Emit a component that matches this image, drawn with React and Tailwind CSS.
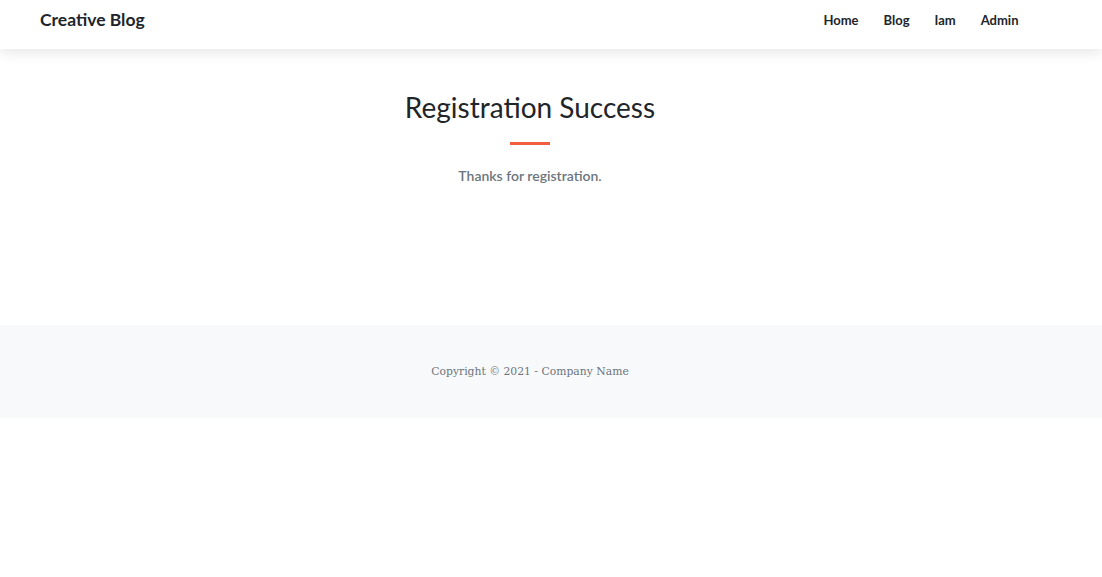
export default function App() {
  return (
    <div className="min-h-[577px] bg-white">
      <nav className="relative z-10 h-[49px] bg-white shadow-[0_2px_14px_rgba(0,0,0,0.12)] flex items-start justify-between pt-[9px] pl-[40px] pr-[71px] font-['Lato',sans-serif]">
        <span className="text-[17.5px] leading-[22px] font-bold text-[#212529]">Creative Blog</span>
        <div className="flex items-center pt-[1px] text-[13px] leading-[20px] font-bold text-[#212529]">
          <a className="px-[12.5px]">Home</a>
          <a className="px-[12.5px]">Blog</a>
          <a className="px-[12.5px]">Iam</a>
          <a className="px-[12.5px]">Admin</a>
        </div>
      </nav>
      <section className="h-[276px] pr-[42px] flex flex-col items-center font-['Lato',sans-serif]">
        <h2 className="mt-[40px] text-[28px] leading-[36px] text-[#212529]">Registration Success</h2>
        <hr className="mt-[17px] w-[40px] border-0 h-[3px] bg-[#f05f40]" />
        <p className="mt-[21px] text-[14px] leading-[20px] font-semibold text-[#6c757d]">Thanks for registration.</p>
      </section>
      <footer className="h-[93px] bg-[#f8f9fa] pr-[42px] flex items-center justify-center">
        <p className="pt-[1px] text-[10.8px] text-[#6c757d] font-['DejaVu_Serif',serif]">Copyright © 2021 - Company Name</p>
      </footer>
    </div>
  );
}
